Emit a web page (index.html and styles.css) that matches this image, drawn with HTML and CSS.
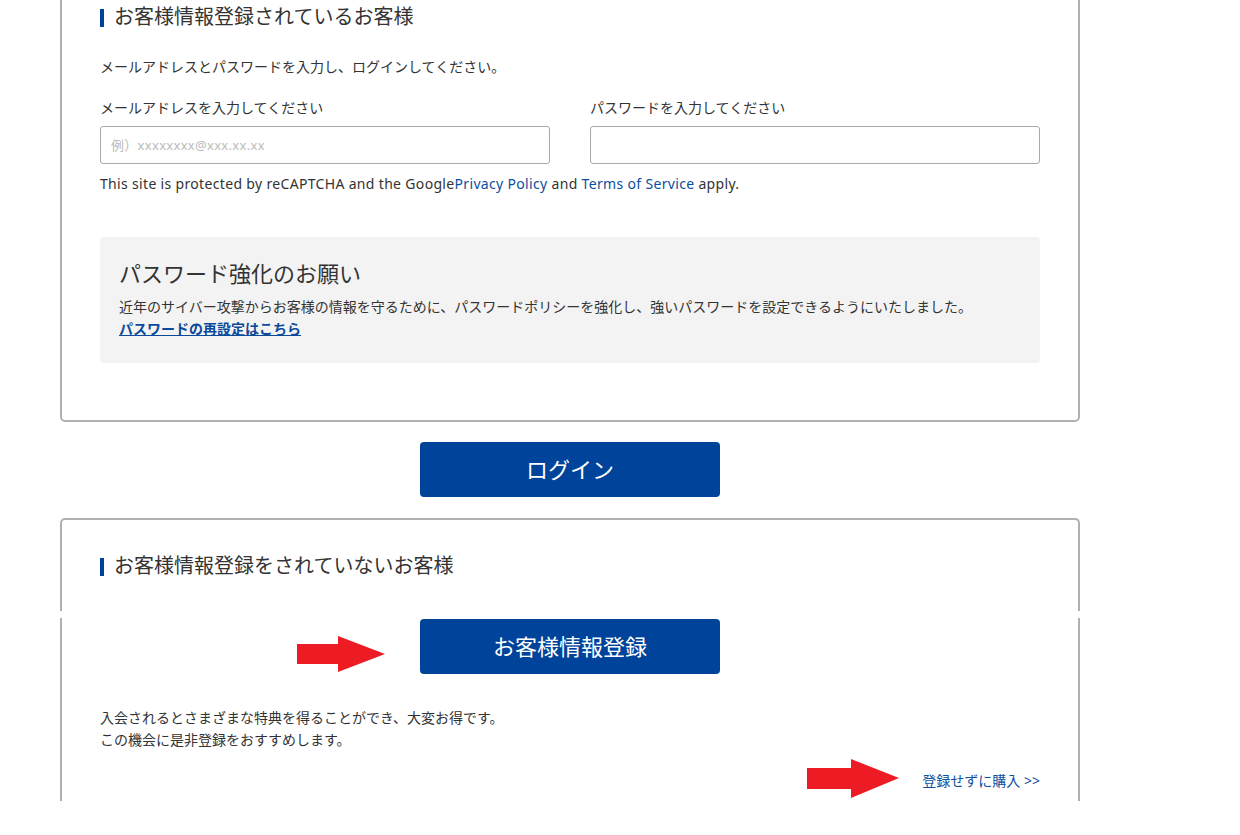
FILE: index.html
```html
<!DOCTYPE html>
<html lang="ja">
<head>
    <meta charset="UTF-8">
    <meta name="viewport" content="width=device-width, initial-scale=1.0">
    <title>ログイン</title>
    <link rel="stylesheet" href="styles.css">
</head>
<body>
    <div class="container">
        <!-- 会員ログイン -->
        <section class="login-box">
            <h2 class="section-title">お客様情報登録されているお客様</h2>
            <p class="lead">メールアドレスとパスワードを入力し、ログインしてください。</p>

            <div class="form-row">
                <div class="form-item">
                    <label class="form-label" for="email">メールアドレスを入力してください</label>
                    <input class="form-input" id="email" type="text" placeholder="例）xxxxxxxx@xxx.xx.xx">
                </div>
                <div class="form-item">
                    <label class="form-label" for="password">パスワードを入力してください</label>
                    <input class="form-input" id="password" type="password">
                </div>
            </div>

            <p class="recaptcha">This site is protected by reCAPTCHA and the Google<a href="#">Privacy Policy</a> and <a href="#">Terms of Service</a> apply.</p>

            <div class="notice">
                <h3 class="notice-title">パスワード強化のお願い</h3>
                <p class="notice-text">近年のサイバー攻撃からお客様の情報を守るために、パスワードポリシーを強化し、強いパスワードを設定できるようにいたしました。</p>
                <a class="notice-link" href="#">パスワードの再設定はこちら</a>
            </div>
        </section>

        <div class="btn-area">
            <button class="btn-primary">ログイン</button>
        </div>

        <!-- 未登録 -->
        <section class="guest-head">
            <h2 class="section-title">お客様情報登録をされていないお客様</h2>
        </section>

        <section class="guest-body">
            <div class="btn-area">
                <button class="btn-primary">お客様情報登録</button>
            </div>
            <p class="guest-text">入会されるとさまざまな特典を得ることができ、大変お得です。<br>この機会に是非登録をおすすめします。</p>
            <div class="guest-link-row">
                <a class="guest-link" href="#">登録せずに購入 &gt;&gt;</a>
            </div>

            <svg class="arrow arrow-register" viewBox="0 0 88 36" aria-hidden="true">
                <path d="M0 8 H41 V0 L88 18 L41 36 V28 H0 Z" fill="#ed1c24"/>
            </svg>
            <svg class="arrow arrow-guest" viewBox="0 0 92 39" aria-hidden="true">
                <path d="M0 9 H44 V0 L92 19 L44 39 V30 H0 Z" fill="#ed1c24"/>
            </svg>
        </section>
    </div>
</body>
</html>
```

FILE: styles.css
```css
:root {
    --text-color: #333;
    --border-color: #b0b0b0;
    --brand-color: #00439a;
    --link-color: #0b4f9e;
}

body {
    margin: 0;
    font-family: "Noto Sans", "Noto Sans CJK JP", sans-serif;
    color: var(--text-color);
    background-color: #fff;
    font-size: 14px;
    line-height: 22px;
}

.container {
    width: 1020px;
    margin-left: 60px;
}

p {
    margin: 0;
}

a {
    color: var(--link-color);
    text-decoration: none;
}

.login-box {
    margin-top: -26px;
    padding: 26px 38px 57px;
    border: 2px solid var(--border-color);
    border-radius: 5px;
}

.section-title {
    position: relative;
    margin: 0;
    padding-left: 14px;
    font-size: 20px;
    font-weight: 400;
    line-height: 30px;
}

.section-title::before {
    content: "";
    position: absolute;
    left: 0;
    top: 7px;
    width: 4px;
    height: 18px;
    background-color: var(--brand-color);
}

.lead {
    margin-top: 24px;
}

.form-row {
    display: flex;
    gap: 40px;
    margin-top: 19px;
}

.form-item {
    flex: 1;
    display: flex;
    flex-direction: column;
    gap: 7px;
}

.form-label {
    display: block;
}

.form-input {
    box-sizing: border-box;
    height: 38px;
    padding: 0 10px;
    border: 1px solid #a9a9a9;
    border-radius: 3px;
    font-family: inherit;
    font-size: 13px;
    color: var(--text-color);
}

.form-input::placeholder {
    color: #bbb;
    letter-spacing: 0.3px;
}

.recaptcha {
    margin-top: 9px;
    letter-spacing: 0.33px;
}

.notice {
    margin-top: 42px;
    padding: 20px 19px 23px;
    background-color: #f3f3f3;
    border-radius: 4px;
}

.notice-title {
    margin: 0;
    font-size: 22px;
    font-weight: 400;
    line-height: 32px;
}

.notice-text {
    margin-top: 7px;
}

.notice-link {
    font-weight: 700;
    text-decoration: underline;
    color: #0b4a9a;
}

.btn-area {
    display: flex;
    justify-content: center;
    margin: 20px 0 21px;
}

.btn-primary {
    width: 300px;
    height: 55px;
    padding: 0 0 4px;
    border: none;
    border-radius: 4px;
    background-color: var(--brand-color);
    color: #fff;
    font-family: "Noto Sans CJK JP", sans-serif;
    font-size: 22px;
    cursor: pointer;
}

.guest-head {
    padding: 31px 38px 30px;
    border: 2px solid var(--border-color);
    border-bottom: none;
    border-radius: 5px 5px 0 0;
}

.guest-body {
    position: relative;
    margin-top: 7px;
    padding: 0 38px 10px;
    border-left: 2px solid var(--border-color);
    border-right: 2px solid var(--border-color);
}

.guest-body .btn-area {
    margin: 0;
    padding-top: 1px;
}

.guest-text {
    margin-top: 33px;
}

.guest-link-row {
    display: flex;
    justify-content: flex-end;
    margin-top: 20px;
}

.guest-link {
    font-size: 14px;
    line-height: 20px;
}

.arrow {
    position: absolute;
}

.arrow-register {
    left: 235px;
    top: 18px;
    width: 88px;
    height: 36px;
}

.arrow-guest {
    left: 745px;
    top: 141px;
    width: 92px;
    height: 39px;
}
```
